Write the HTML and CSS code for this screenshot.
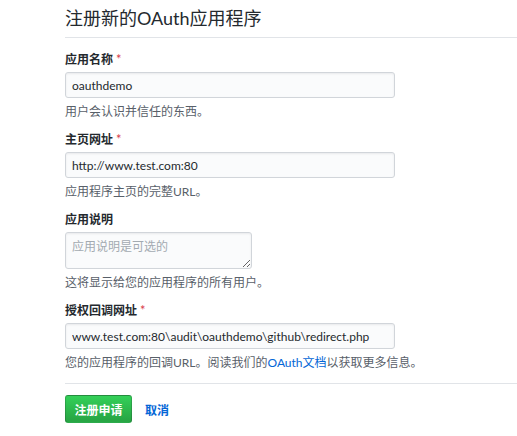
FILE: index.html
```html
<!DOCTYPE html>
<html lang="zh-CN">
<head>
    <meta charset="UTF-8">
    <meta name="viewport" content="width=device-width, initial-scale=1.0">
    <title>注册新的OAuth应用程序</title>
    <link rel="stylesheet" href="styles.css">
</head>
<body>
    <div class="container">
        <div class="page-head">
            <h2>注册新的OAuth应用程序</h2>
        </div>
        <form class="app-form">
            <div class="field">
                <label>应用名称 <span class="req">*</span></label>
                <input type="text" class="input-wide" value="oauthdemo">
                <p class="note">用户会认识并信任的东西。</p>
            </div>
            <div class="field">
                <label>主页网址 <span class="req">*</span></label>
                <input type="text" class="input-wide" value="http://www.test.com:80">
                <p class="note">应用程序主页的完整URL。</p>
            </div>
            <div class="field">
                <label>应用说明</label>
                <textarea placeholder="应用说明是可选的"></textarea>
                <p class="note">这将显示给您的应用程序的所有用户。</p>
            </div>
            <div class="field">
                <label>授权回调网址 <span class="req">*</span></label>
                <input type="text" class="input-wide" value="www.test.com:80\audit\oauthdemo\github\redirect.php">
                <p class="note">您的应用程序的回调URL。阅读我们的<a href="#">OAuth文档</a>以获取更多信息。</p>
            </div>
            <div class="actions">
                <button type="button" class="btn-primary">注册申请</button>
                <a href="#" class="cancel">取消</a>
            </div>
        </form>
    </div>
</body>
</html>
```

FILE: styles.css
```css
body{
    margin: 0;
    background: white;
    color: #24292e;
    font-family: Lato, "Noto Sans CJK SC", sans-serif;
}
.container{
    padding: 5px 0 0 65px;
}
.page-head{
    border-bottom: 1px solid #e1e4e8;
    padding-bottom: 5px;
    margin-bottom: 14px;
}
.page-head h2{
    margin: 0;
    font-size: 18px;
    line-height: 27px;
    font-weight: normal;
}
.field{
    margin-bottom: 12px;
}
.field label{
    display: block;
    height: 16px;
    font-size: 12px;
    line-height: 16px;
    font-weight: bold;
    margin-bottom: 4px;
}
.req{
    color: #d73a49;
    font-size: 13px;
    line-height: 10px;
    font-weight: normal;
}
.field input,
.field textarea{
    display: block;
    box-sizing: border-box;
    background-color: #fafbfc;
    border: 1px solid #d1d5da;
    border-radius: 3px;
    color: #24292e;
    font-family: inherit;
    font-size: 12px;
    padding: 0 6px;
    outline: none;
    box-shadow: inset 0 1px 2px rgba(27,31,35,0.075);
}
.input-wide{
    width: 330px;
    height: 26px;
}
.field textarea{
    width: 187px;
    height: 37px;
    padding: 4px 6px;
    resize: vertical;
}
.field textarea::placeholder{
    color: #a3aab1;
}
.note{
    margin: 6px 0 0 0;
    font-size: 12px;
    line-height: 16px;
    color: #586069;
}
.note a{
    color: #0366d6;
    text-decoration: none;
}
.actions{
    border-top: 1px solid #e1e4e8;
    padding-top: 11px;
    display: flex;
    align-items: center;
    gap: 13px;
}
.btn-primary{
    background-image: linear-gradient(-180deg, #34d058 0%, #28a745 90%);
    border: 1px solid rgba(27,31,35,0.2);
    border-radius: 3px;
    color: white;
    font-family: inherit;
    font-size: 12px;
    font-weight: bold;
    width: 67px;
    height: 28px;
    padding: 0;
}
.cancel{
    color: #0366d6;
    font-size: 12px;
    font-weight: bold;
    text-decoration: none;
}
```
